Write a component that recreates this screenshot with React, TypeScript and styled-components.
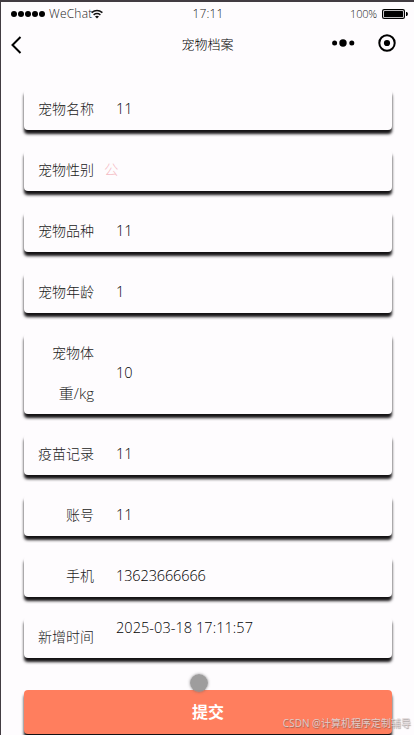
import React from 'react';
import styled, { createGlobalStyle } from 'styled-components';

const Global = createGlobalStyle`
  * { box-sizing: border-box; }
  html, body { margin: 0; overflow: hidden; }
  body { background: #fefcfe; font-family: "Open Sans", "Noto Sans CJK SC", sans-serif; }
`;

const Screen = styled.main`
  position: relative;
  width: 414px;
  height: 735px;
  overflow: hidden;
  border-top: 2px solid #423c42;
  border-left: 1px solid #423c42;
  background: #fefcfe;
`;

const StatusBar = styled.div`
  display: grid;
  grid-template-columns: 1fr auto 1fr;
  align-items: center;
  height: 23px;
  padding: 0 6px 0 9px;
  font-size: 12px;
  line-height: 22px;
  color: #222;
  font-weight: 300;
`;

const Carrier = styled.div`
  display: flex;
  align-items: center;
  span { margin-left: 3px; font-size: 12px; letter-spacing: 0.2px; }
  svg:last-child { margin-left: -1px; }
`;

const Clock = styled.span`
  margin-left: -2px;
  font-size: 12px;
  letter-spacing: 0.1px;
`;

const Battery = styled.div`
  display: flex;
  align-items: center;
  justify-content: flex-end;
  gap: 5px;
  font-size: 11px;
  letter-spacing: -0.2px;
`;

const NavBar = styled.header`
  display: grid;
  grid-template-columns: 1fr auto 1fr;
  align-items: center;
  height: 38px;
  padding: 2px 17px 0 9px;
`;

const Title = styled.h1`
  margin: 0 0 2px 8px;
  font: 300 13px/20px "Noto Sans CJK SC", sans-serif;
  color: #000;
`;

const Actions = styled.div`
  display: flex;
  align-items: center;
  justify-content: flex-end;
  gap: 22px;
  padding-bottom: 5px;
`;

const Form = styled.form`
  display: flex;
  flex-direction: column;
  gap: 20px;
  padding: 26px 22px 0 23px;
`;

const Card = styled.div`
  display: flex;
  align-items: center;
  padding-bottom: 1px;
  border-radius: 4px;
  background: #fefcfe;
  box-shadow: 0 4px 3px #141214;
`;

const Label = styled.label`
  width: 70px;
  font: 300 14px/40px "Open Sans", "Noto Sans CJK SC", sans-serif;
  color: #222;
  text-align: right;
`;

const UnitLine = styled.span`
  display: block;
  font-size: 15px;
  line-height: 40px;
`;

const Value = styled.div<{ $kind?: 'choice' | 'date' }>`
  margin-left: ${p => (p.$kind === 'choice' ? 10 : 22)}px;
  padding-bottom: ${p => (p.$kind === 'date' ? 19 : 0)}px;
  font-size: 14.5px;
  font-weight: ${p => (p.$kind === 'choice' ? 300 : 350)};
  line-height: 20px;
  letter-spacing: ${p => (p.$kind === 'date' ? 0.06 : -0.12)}px;
  color: ${p => (p.$kind === 'choice' ? '#f5bcc5' : '#000')};
`;

const Submit = styled.button`
  height: 44px;
  margin-top: 12px;
  padding: 0 0 2px;
  border: 0;
  border-radius: 4px;
  background: #ff7e5e;
  box-shadow: 0 4px 3px #141214;
  color: #fff;
  font: 700 16px/42px "Noto Sans CJK SC", sans-serif;
`;

const TouchPoint = styled.div`
  position: absolute;
  left: 189px;
  top: 672px;
  width: 18px;
  height: 18px;
  border-radius: 50%;
  background: rgba(145, 143, 143, 0.88);
  box-shadow: 0 0 3px rgba(100, 100, 100, 0.7);
`;

const Watermark = styled.div`
  position: absolute;
  right: 3px;
  bottom: 4px;
  font: 400 10px/16px "Open Sans", "Noto Sans CJK SC", sans-serif;
  color: rgba(225, 215, 215, 0.9);
  text-shadow: 0.5px 0.5px 1px rgba(90, 80, 80, 0.6);
  white-space: nowrap;
`;

type Field = { label: string; unitLine?: string; value: string; kind?: 'choice' | 'date' };

const fields: Field[] = [
  { label: '宠物名称', value: '11' },
  { label: '宠物性别', value: '公', kind: 'choice' },
  { label: '宠物品种', value: '11' },
  { label: '宠物年龄', value: '1' },
  { label: '宠物体', unitLine: '重/kg', value: '10' },
  { label: '疫苗记录', value: '11' },
  { label: '账号', value: '11' },
  { label: '手机', value: '13623666666' },
  { label: '新增时间', value: '2025-03-18 17:11:57', kind: 'date' },
];

const SignalIcon = () => (
  <svg width="36" height="8" viewBox="0 0 36 8">
    {[4, 11, 18, 25, 32].map(x => <circle key={x} cx={x} cy="4" r="3" />)}
  </svg>
);

const WifiIcon = () => (
  <svg width="12" height="10" viewBox="0 0 12 10" fill="none" stroke="#111" strokeWidth="1.5">
    <path d="M.6 3.7Q6-.8 11.4 3.7M2.6 5.8Q6 3.2 9.4 5.8" />
    <path d="M4 7.4Q6 6 8 7.4L6 9.5Z" fill="#111" stroke="none" />
  </svg>
);

const BatteryIcon = () => (
  <svg width="26" height="10" viewBox="0 0 26 10">
    <rect x=".6" y=".6" width="21.8" height="8.8" rx="1.5" fill="none" stroke="#000" strokeWidth="1.2" />
    <rect x="2" y="2" width="19" height="6" rx=".5" />
    <path d="M24 3h.8l1 1v2l-1 1H24z" />
  </svg>
);

export default function App() {
  return (
    <>
      <Global />
      <Screen>
        <StatusBar>
          <Carrier><SignalIcon /><span>WeChat</span><WifiIcon /></Carrier>
          <Clock>17:11</Clock>
          <Battery>100%<BatteryIcon /></Battery>
        </StatusBar>
        <NavBar>
          <svg width="12" height="18" viewBox="0 0 12 18" fill="none" stroke="#000" strokeWidth="2">
            <path d="M10.5 1L2.5 9l8 8" />
          </svg>
          <Title>宠物档案</Title>
          <Actions>
            <svg width="24" height="8" viewBox="0 0 24 8">
              <circle cx="3.6" cy="4" r="2.5" /><circle cx="12" cy="4" r="3.7" /><circle cx="20.8" cy="4" r="2.5" />
            </svg>
            <svg width="20" height="20" viewBox="0 0 20 20">
              <circle cx="10" cy="10" r="7.7" fill="none" stroke="#000" strokeWidth="2" />
              <circle cx="10" cy="10" r="3.1" />
            </svg>
          </Actions>
        </NavBar>
        <Form>
          {fields.map(field => (
            <Card key={field.label}>
              <Label>{field.label}{field.unitLine && <UnitLine>{field.unitLine}</UnitLine>}</Label>
              <Value $kind={field.kind}>{field.value}</Value>
            </Card>
          ))}
          <Submit type="button">提交</Submit>
        </Form>
        <TouchPoint />
        <Watermark>CSDN @计算机程序定制辅导</Watermark>
      </Screen>
    </>
  );
}
